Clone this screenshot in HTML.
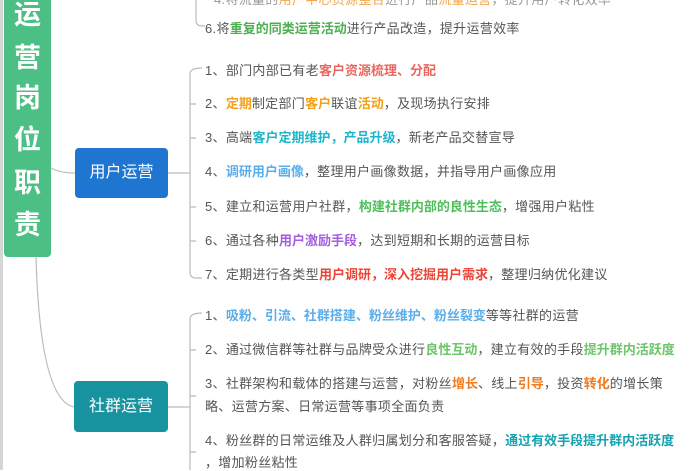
<!DOCTYPE html>
<html><head><meta charset="utf-8"><style>
body{margin:0;width:700px;height:470px;overflow:hidden;background:#fff;position:relative;font-family:"Liberation Sans","Noto Sans CJK SC",sans-serif}
.t{position:absolute;left:205px;font-size:13px;color:#555;white-space:nowrap;line-height:16px;letter-spacing:0.3px}
.b{font-weight:bold;letter-spacing:0}
.box{position:absolute;color:#fff;font-size:16px;text-align:center;border-radius:4px}
.v{position:absolute;left:4px;top:-10px;width:47px;height:267px;background:#4cbf84;border-radius:0 0 4px 4px}
.v span{position:absolute;left:0;width:47px;text-align:center;color:#fff;font-size:27px;font-weight:bold;line-height:30px}
</style></head><body>
<div style="position:absolute;left:0;top:0;width:3px;height:470px;background:#d6d6d6"></div>
<div class="v">
<span style="top:10px">运</span><span style="top:53px">营</span><span style="top:93px">岗</span><span style="top:135px">位</span><span style="top:178px">职</span><span style="top:220px">责</span>
</div>
<svg width="700" height="470" style="position:absolute;left:0;top:0" fill="none" stroke="#bbb" stroke-width="1.2">
<path d="M51 168 Q60 173 75 173"/>
<path d="M36 257 Q40 400 74 407"/>
<path d="M168 173 H190"/>
<path d="M168 407 H190"/>
<path d="M196 0 V20 Q196 26 202 26 H205"/>
<path d="M202 68 Q190 68 190 74 V272 Q190 278 196 278 H202"/>
<path d="M190 104 H196 M190 138 H196 M190 207 H196 M190 241 H196"/>
<path d="M202 313 Q190 313 190 319 V470"/>
<path d="M190 350 H196 M190 396 H196 M190 452 H196"/>
</svg>
<div class="box" style="left:75px;top:148px;width:93px;height:50px;line-height:50px;background:#1f76d0">用户运营</div>
<div class="box" style="left:74px;top:381px;width:94px;height:51px;line-height:51px;background:#17939f">社群运营</div>

<div class="t" style="top:-8px;left:214px;color:#999">4.将流量的<span style="color:#f5a64a">用户中心资源整合</span>进行产品<span style="color:#f5a64a">流量运营</span>，提升用户转化效率</div>
<div class="t" style="top:21px">6.将<span class="b" style="color:#4caf50">重复的同类运营活动</span>进行产品改造，提升运营效率</div>

<div class="t" style="top:63px">1、部门内部已有老<span class="b" style="color:#e8675f">客户资源梳理、分配</span></div>
<div class="t" style="top:96px">2、<span class="b" style="color:#f2a11a">定期</span>制定部门<span class="b" style="color:#f2a11a">客户</span>联谊<span class="b" style="color:#f2a11a">活动</span>，及现场执行安排</div>
<div class="t" style="top:130px">3、高端<span class="b" style="color:#1fb5c9">客户定期维护，产品升级</span>，新老产品交替宣导</div>
<div class="t" style="top:164px">4、<span class="b" style="color:#5aaeea">调研用户画像</span>，整理用户画像数据，并指导用户画像应用</div>
<div class="t" style="top:199px">5、建立和运营用户社群，<span class="b" style="color:#4fbf5c">构建社群内部的良性生态</span>，增强用户粘性</div>
<div class="t" style="top:233px">6、通过各种<span class="b" style="color:#a55de0">用户激励手段</span>，达到短期和长期的运营目标</div>
<div class="t" style="top:267px">7、定期进行各类型<span class="b" style="color:#ec4437">用户调研，深入挖掘用户需求</span>，整理归纳优化建议</div>

<div class="t" style="top:308px">1、<span class="b" style="color:#5aaeea">吸粉、引流、社群搭建、粉丝维护、粉丝裂变</span>等等社群的运营</div>
<div class="t" style="top:342px">2、通过微信群等社群与品牌受众进行<span class="b" style="color:#6cc66a">良性互动</span>，建立有效的手段<span class="b" style="color:#6cc66a">提升群内活跃度</span></div>
<div class="t" style="top:376px">3、社群架构和载体的搭建与运营，对粉丝<span class="b" style="color:#f07a1e">增长</span>、线上<span class="b" style="color:#f07a1e">引导</span>，投资<span class="b" style="color:#f07a1e">转化</span>的增长策</div>
<div class="t" style="top:399px">略、运营方案、日常运营等事项全面负责</div>
<div class="t" style="top:433px">4、粉丝群的日常运维及人群归属划分和客服答疑，<span class="b" style="color:#16a2b0">通过有效手段提升群内活跃度</span></div>
<div class="t" style="top:455px">，增加粉丝粘性</div>
</body></html>
